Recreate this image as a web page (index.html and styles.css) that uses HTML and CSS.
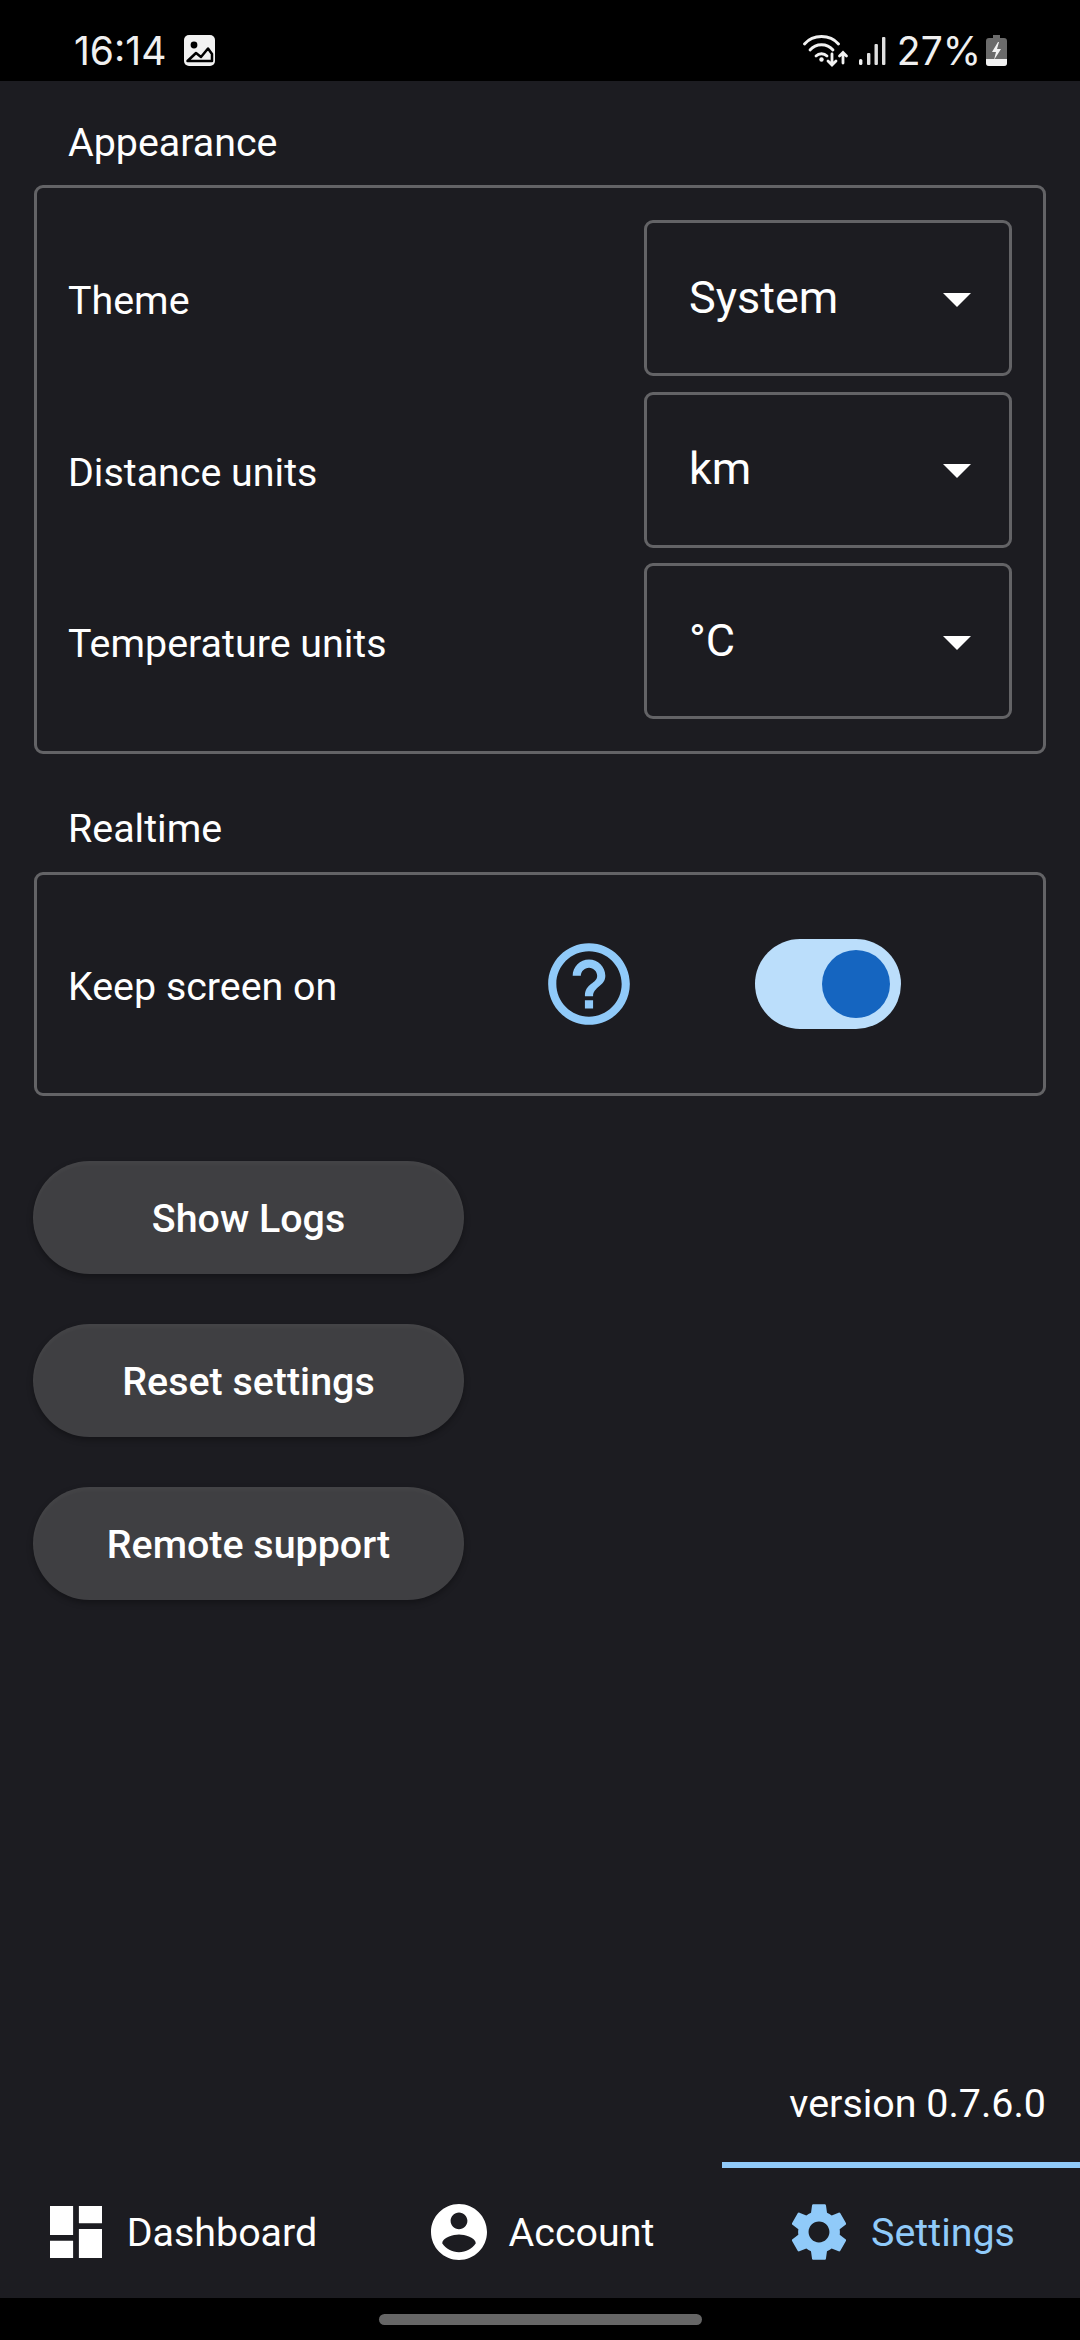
FILE: index.html
```html
<!DOCTYPE html>
<html lang="en">
<head>
  <meta charset="UTF-8" />
  <title>Settings</title>
  <link rel="stylesheet" href="styles.css">
</head>
<body>
  <!-- Status bar -->
  <div class="status-bar">
    <div class="status-left">
      <span class="clock">16:14</span>
      <svg class="status-image" viewBox="0 0 31 31">
        <rect width="31" height="31" rx="5" fill="#f2f2f2"/>
        <circle cx="10" cy="10" r="3.4" fill="#000"/>
        <path d="M3.500 26 L12 18 L17 22 L24 13.500 L28 19 V26 Z" fill="none" stroke="#000" stroke-width="2.500" stroke-linejoin="round"/>
      </svg>
    </div>
    <div class="status-right">
      <svg class="status-wifi" viewBox="0 0 46 32">
        <g fill="none" stroke="#f2f2f2" stroke-width="2.800" stroke-linecap="round">
          <path d="M1.500 9 C10 -1 27 -1 35.500 9"/>
          <path d="M7 15 C13 8 24 8 30 15"/>
          <path d="M13 21 C16 18 21 18 24 21"/>
          <path d="M29 19v11M25 26l4 4 4-4"/>
          <path d="M40 28V18M36.500 21l3.500-3.500 3.500 3.500"/>
        </g>
        <circle cx="18.500" cy="24.500" r="2.200" fill="#f2f2f2"/>
      </svg>
      <svg class="status-signal" viewBox="0 0 27 28">
        <rect x="0" y="22" width="3.400" height="6" rx="1.500" fill="#f2f2f2"/>
        <rect x="8" y="16" width="3.400" height="12" rx="1" fill="#e0e0e0"/>
        <rect x="15.500" y="7" width="3.400" height="21" rx="1" fill="#e0e0e0"/>
        <rect x="23" y="0" width="3.400" height="28" rx="1" fill="#e0e0e0"/>
      </svg>
      <span class="battery-text">27%</span>
      <svg class="status-battery" viewBox="0 0 21 31">
        <path d="M7 0h7v3h4a3 3 0 0 1 3 3v22a3 3 0 0 1-3 3H3a3 3 0 0 1-3-3V6a3 3 0 0 1 3-3h4z" fill="#6b6b6b"/>
        <path d="M0 24h21v4a3 3 0 0 1-3 3H3a3 3 0 0 1-3-3z" fill="#f2f2f2"/>
        <path d="M12 7l-6 10h4l-2 8 7-11h-4l2-7z" fill="#f2f2f2"/>
      </svg>
    </div>
  </div>

  <div class="content">
    <!-- Appearance -->
    <div class="section-title">Appearance</div>
    <div class="card">
      <div class="row">
        <span class="row-label">Theme</span>
        <div class="select"><span>System</span><i class="arrow"></i></div>
      </div>
      <div class="row">
        <span class="row-label">Distance units</span>
        <div class="select"><span>km</span><i class="arrow"></i></div>
      </div>
      <div class="row">
        <span class="row-label">Temperature units</span>
        <div class="select"><span>°C</span><i class="arrow"></i></div>
      </div>
    </div>

    <!-- Realtime -->
    <div class="section-title realtime-title">Realtime</div>
    <div class="card realtime-card">
      <div class="row">
        <span class="row-label">Keep screen on</span>
        <svg class="help-icon" viewBox="0 0 24 24">
          <path d="M11 18h2v-2h-2v2zm1-16C6.480 2 2 6.480 2 12s4.480 10 10 10 10-4.480 10-10S17.520 2 12 2zm0 18c-4.410 0-8-3.590-8-8s3.590-8 8-8 8 3.590 8 8-3.590 8-8 8zm0-14c-2.210 0-4 1.790-4 4h2c0-1.100.9-2 2-2s2 .9 2 2c0 2-3 1.750-3 5h2c0-2.250 3-2.500 3-5 0-2.210-1.790-4-4-4z"/>
        </svg>
        <div class="switch-slot">
          <div class="switch"><div class="switch-thumb"></div></div>
        </div>
      </div>
    </div>

    <div class="actions">
      <button class="action-btn">Show Logs</button>
      <button class="action-btn">Reset settings</button>
      <button class="action-btn">Remote support</button>
    </div>

    <div class="version">version 0.7.6.0</div>
  </div>

  <!-- Bottom tabs -->
  <div class="tabs">
    <div class="tab">
      <svg class="tab-icon" viewBox="3 3 18 18">
        <path d="M3 13h8V3H3v10zm0 8h8v-6H3v6zm10 0h8V11h-8v10zm0-18v6h8V3h-8z"/>
      </svg>
      <span>Dashboard</span>
    </div>
    <div class="tab account-tab">
      <svg class="tab-icon" viewBox="2 2 20 20">
        <path d="M12 2C6.480 2 2 6.480 2 12s4.480 10 10 10 10-4.480 10-10S17.520 2 12 2zm0 3c1.660 0 3 1.340 3 3s-1.340 3-3 3-3-1.340-3-3 1.340-3 3-3zm0 14.200c-2.500 0-4.710-1.280-6-3.220.03-1.990 4-3.080 6-3.080 1.990 0 5.970 1.090 6 3.080-1.290 1.940-3.500 3.220-6 3.220z"/>
      </svg>
      <span>Account</span>
    </div>
    <div class="tab active">
      <svg class="tab-icon" viewBox="2 2 20 20">
        <path d="M19.140 12.940c.04-.3.06-.61.06-.94 0-.32-.02-.64-.07-.94l2.030-1.580c.18-.14.23-.41.12-.61l-1.920-3.320c-.12-.22-.37-.29-.59-.22l-2.390.96c-.5-.38-1.030-.7-1.620-.94l-.36-2.540c-.04-.24-.24-.41-.48-.41h-3.840c-.24 0-.43.17-.47.41l-.36 2.540c-.59.24-1.130.57-1.620.94l-2.390-.96c-.22-.08-.47 0-.59.22L2.740 8.870c-.12.21-.08.47.12.61l2.030 1.580c-.05.3-.09.63-.09.94s.02.64.07.94l-2.030 1.580c-.18.14-.23.41-.12.61l1.920 3.320c.12.22.37.29.59.22l2.390-.96c.5.38 1.030.7 1.620.94l.36 2.540c.05.24.24.41.48.41h3.840c.24 0 .44-.17.47-.41l.36-2.540c.59-.24 1.130-.56 1.620-.94l2.390.96c.22.08.47 0 .59-.22l1.920-3.320c.12-.22.07-.47-.12-.61l-2.010-1.580zM12 15.600c-1.980 0-3.600-1.620-3.600-3.600s1.620-3.600 3.600-3.600 3.600 1.620 3.600 3.600-1.620 3.600-3.600 3.600z"/>
      </svg>
      <span>Settings</span>
    </div>
  </div>

  <div class="nav-bar"><div class="home-pill"></div></div>
</body>
</html>
```

FILE: styles.css
```css
* {
  margin: 0;
  padding: 0;
  box-sizing: border-box;
}

html, body {
  height: 100%;
  width: 100%;
  overflow: hidden;
}

body {
  display: flex;
  flex-direction: column;
  background-color: #1c1c21;
  color: white;
  font-family: Roboto, 'Liberation Sans', sans-serif;
  font-size: 39.4px;
}

.status-bar {
  height: 81px;
  flex-shrink: 0;
  background-color: #000;
  color: #f0f0f0;
  display: flex;
  justify-content: space-between;
  align-items: center;
  padding: 20px 73px 0 74px;
  font-family: Inter, Roboto, sans-serif;
  font-size: 39px;
}

.status-left, .status-right {
  display: flex;
  align-items: center;
}

.status-image {
  width: 31px;
  height: 31px;
  margin-left: 18px;
}

.status-wifi {
  width: 46px;
  height: 32px;
}

.status-signal {
  width: 27px;
  height: 28px;
  margin-left: 10px;
}

.battery-text {
  margin-left: 11px;
}

.status-battery {
  width: 21px;
  height: 31px;
  margin-left: 5px;
}

.content {
  flex: 1;
  display: flex;
  flex-direction: column;
  padding: 0 34px;
}

.section-title {
  padding: 20px 0 0 34px;
  height: 104px;
  line-height: 83px;
}

.realtime-title {
  margin-top: 32px;
  padding-top: 0;
  height: 86px;
  line-height: 86px;
}

.card {
  border: 3px solid #636366;
  border-radius: 9px;
  padding: 32px 31px;
  display: flex;
  flex-direction: column;
  gap: 15.5px;
}

.realtime-card {
  padding: 31px;
}

.row {
  display: flex;
  align-items: center;
  height: 156px;
}

.row-label {
  flex: 1;
  padding-top: 5px;
}

.select {
  width: 368px;
  height: 156px;
  border: 3px solid #636366;
  border-radius: 9px;
  display: flex;
  align-items: center;
  justify-content: space-between;
  padding: 0 38px 2px 42px;
  font-size: 45px;
}

.arrow {
  width: 0;
  height: 0;
  margin-top: 5px;
  border-left: 14px solid transparent;
  border-right: 14px solid transparent;
  border-top: 14px solid white;
}

.help-icon {
  width: 98px;
  height: 98px;
  margin-right: 6px;
  fill: #90caf9;
}

.switch-slot {
  width: 368px;
  display: flex;
  justify-content: center;
}

.switch {
  width: 146px;
  height: 90px;
  border-radius: 45px;
  background-color: #bbdefb;
  display: flex;
  align-items: center;
  justify-content: flex-end;
  padding-right: 11px;
}

.switch-thumb {
  width: 68px;
  height: 68px;
  border-radius: 50%;
  background-color: #1565c0;
}

.actions {
  display: flex;
  flex-direction: column;
  align-items: flex-start;
  gap: 50px;
  margin-top: 65px;
}

.action-btn {
  width: 431px;
  height: 113px;
  margin-left: -1px;
  padding-top: 2px;
  border: none;
  border-radius: 57px;
  background-color: #3f3f42;
  box-shadow: 0 3px 6px rgba(0, 0, 0, 0.3), inset 0 3px 4px rgba(255, 255, 255, 0.03);
  color: white;
  font-family: Roboto, sans-serif;
  font-size: 39.4px;
  font-weight: 500;
}

.version {
  margin-top: auto;
  padding-bottom: 35px;
  text-align: right;
}

.tabs {
  height: 136px;
  flex-shrink: 0;
  display: grid;
  grid-template-columns: 367px 355px 358px;
}

.tab {
  display: flex;
  align-items: center;
  justify-content: center;
  gap: 25px;
  padding-bottom: 2px;
  border-top: 6px solid transparent;
}

.account-tab {
  gap: 22px;
  padding-right: 4px;
}

.tab.active {
  border-top-color: #90caf9;
  color: #90caf9;
  gap: 23px;
  padding-left: 3px;
}

.tab-icon {
  width: 52px;
  height: 52px;
  fill: white;
}

.account-tab .tab-icon {
  width: 56px;
  height: 56px;
}

.tab.active .tab-icon {
  fill: #90caf9;
  width: 58px;
  height: 58px;
}

.nav-bar {
  height: 42px;
  flex-shrink: 0;
  background-color: #000;
  display: flex;
  justify-content: center;
  padding-top: 16px;
}

.home-pill {
  width: 323px;
  height: 11px;
  border-radius: 6px;
  background-color: #666;
}
```
